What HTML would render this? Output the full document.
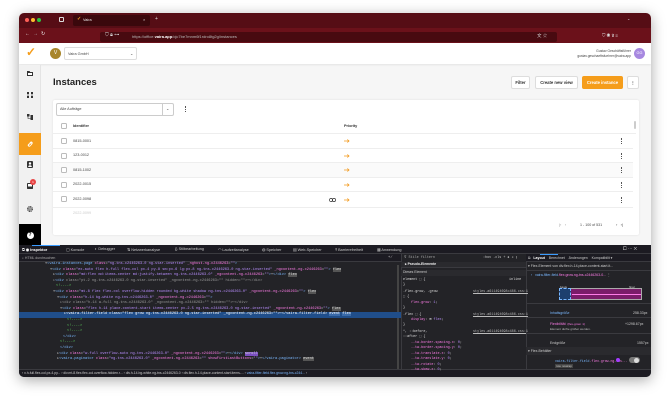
<!DOCTYPE html>
<html><head><meta charset="utf-8"><style>
*{box-sizing:border-box;margin:0;padding:0}
body{width:670px;height:402px;background:#fff;position:relative;overflow:hidden;font-family:"Liberation Sans",sans-serif}
.a{position:absolute}
.win{left:19px;top:13px;width:632px;height:364px;border-radius:5px;overflow:hidden;box-shadow:0 3px 14px rgba(0,0,0,.35);background:#f6f6f6}
.t{position:absolute;white-space:nowrap}
.btn{position:absolute;border:1px solid #ddd;background:#fff;border-radius:2px;font-size:4.2px;font-weight:bold;color:#333;display:flex;align-items:center;justify-content:center}
.row{position:absolute;left:53px;width:583px;height:14.5px;border-bottom:0.6px solid #eee;background:#fff}
.cb{position:absolute;left:8px;top:4px;width:6px;height:6px;border:0.6px solid #bbb;border-radius:1.5px;background:#fff}
.id{position:absolute;left:20px;top:4.5px;font-size:3.8px;color:#444}
.pr{position:absolute;left:291px;top:5px}
.km{position:absolute;left:568px;top:4px;width:1.2px;height:6px;border-left:1.2px dotted #555}
.code{font-family:"Liberation Mono",monospace;font-size:3.6px;color:#ddd}
.tag{color:#7ab8ff}.at{color:#ff7de9}.vl{color:#b98eff}
.ln{position:absolute;white-space:nowrap;height:5.6px;line-height:5.6px}
.dt{font-size:3.8px;color:#ccc}
.si{position:absolute;left:8px}
</style></head><body>
<div class="a win">
 <div class="a" style="left:0;top:0;width:632px;height:15px;background:#560d15"></div>
 <div class="a" style="left:6px;top:5px;width:4px;height:4px;border-radius:50%;background:#ff5f57"></div>
 <div class="a" style="left:12px;top:5px;width:4px;height:4px;border-radius:50%;background:#febc2e"></div>
 <div class="a" style="left:18px;top:5px;width:4px;height:4px;border-radius:50%;background:#28c840"></div>
 <div class="a" style="left:40px;top:4px;width:5px;height:5px;border:0.8px solid #ddd;border-radius:1px"></div>
 <div class="a" style="left:54px;top:1.5px;width:77px;height:11px;background:#3a080c;border-radius:2px"></div>
 <div class="t" style="left:58px;top:3px;font-size:5px;color:#f5a623;font-weight:bold">✓</div>
 <div class="t" style="left:64px;top:4.5px;font-size:3.8px;color:#eee">Vaira</div>
 <div class="t" style="left:124px;top:3.5px;font-size:4px;color:#ddd">×</div>
 <div class="t" style="left:136px;top:3px;font-size:5px;color:#ddd">+</div>
 <div class="t" style="left:608px;top:3px;font-size:4px;color:#ddd">⌄</div>
 <div class="a" style="left:0;top:15px;width:632px;height:15px;background:#6b111a"></div>
 <div class="t" style="left:6px;top:18px;font-size:5px;color:#eee">←</div>
 <div class="t" style="left:14px;top:18px;font-size:5px;color:#bbb">→</div>
 <div class="t" style="left:22px;top:18px;font-size:5px;color:#eee">↻</div>
 <div class="a" style="left:81px;top:18.5px;width:457px;height:10px;background:#480a10;border-radius:2px"></div>
 <div class="t" style="left:86px;top:19px;font-size:5px;color:#ddd">⛉ 🔒︎ ⊶</div>
 <div class="t" style="left:113px;top:21px;font-size:4px;color:#bbb">https://office.<b style="color:#fff">vaira.app</b>/ojc7be7mnm6f1rdro8tg2g/instances</div>
 <div class="t" style="left:518px;top:19.5px;font-size:4.5px;color:#ddd">文 ☆</div>
 <div class="t" style="left:583px;top:19.5px;font-size:4.5px;color:#ddd">⛉ ◉ ⇧ ≡</div>
 <div class="a" style="left:0;top:30px;width:632px;height:21px;background:#fff;box-shadow:0 1px 2px rgba(0,0,0,.08)"></div>
 <div class="t" style="left:7px;top:32px;font-size:12px;color:#f59d1b;font-weight:bold">✓</div>
 <div class="a" style="left:31px;top:35px;width:11px;height:11px;border-radius:50%;background:#a8862c;color:#fff;font-size:5px;text-align:center;line-height:11px">V</div>
 <div class="a" style="left:45px;top:34px;width:73px;height:13px;border:0.6px solid #ddd;border-radius:2px;background:#fff"></div>
 <div class="t" style="left:49px;top:38.5px;font-size:3.8px;color:#444">Vaira GmbH</div>
 <div class="t" style="left:111px;top:37.5px;font-size:4px;color:#444">⌄</div>
 <div class="t" style="left:440px;top:36px;font-size:3.3px;color:#444;text-align:right;width:172px;line-height:4.6px">Gustav Geschäftsführer<br>gustav.geschaeftsfuehrer@vaira.app</div>
 <div class="a" style="left:615px;top:35px;width:11px;height:11px;border-radius:50%;background:#a788e0;color:#fff;font-size:3.8px;text-align:center;line-height:11px">GG</div>
 <!-- sidebar -->
 <div class="a" style="left:0;top:52px;width:22px;height:181px;background:#f1f1f1;border-right:0.6px solid #e4e4e4"></div>
 <svg class="si" style="top:58px" width="6" height="5"><path d="M0 0h2.5l.7 1H6v4H0z" fill="#333"/><rect x="1" y="2" width="4" height="2" fill="#fff"/></svg>
 <svg class="si" style="top:79px" width="6" height="6"><rect x="0" y="0" width="2" height="2" fill="#333"/><rect x="4" y="0" width="2" height="2" fill="#333"/><rect x="0" y="4" width="2" height="2" fill="#333"/><rect x="4" y="4" width="2" height="2" fill="#333"/><path d="M1 2v2M5 2v2" stroke="#333" stroke-width=".6"/></svg>
 <svg class="si" style="top:101px" width="6" height="6"><rect x="0" y="0" width="2.5" height="2.5" fill="#333"/><rect x="3.5" y="1" width="2.5" height="2.5" fill="#333"/><rect x="3.5" y="3.5" width="2.5" height="2.5" fill="#333"/><path d="M1 2.5v2h2.5" stroke="#333" stroke-width=".6" fill="none"/></svg>
 <div class="a" style="left:0;top:120px;width:22px;height:22px;background:#f59d1b"></div>
 <svg class="si" style="top:128px" width="6" height="6"><path d="M1 5l1.5-1.5M3.5 2.5L5 1M1.5 3.5l1-1a1 1 0 011.5 1.5l-1 1a1 1 0 01-1.5-1.5zM2.5 2.5l1-1.2a1 1 0 011.5 1.5l-1 1" stroke="#fff" stroke-width=".8" fill="none"/></svg>
 <svg class="si" style="top:148px" width="6" height="7"><rect x="0" y="0" width="6" height="7" rx="1" fill="#333"/><circle cx="3" cy="2.5" r="1.2" fill="#fff"/><path d="M1.2 6a1.8 1.8 0 013.6 0z" fill="#fff"/></svg>
 <svg class="si" style="top:170px" width="6" height="6"><rect x="0" y="0" width="6" height="6" rx=".8" fill="#333"/><rect x="1" y="1" width="4" height="2.5" fill="#fff"/></svg>
 <div class="a" style="left:11px;top:166px;width:6px;height:6px;border-radius:50%;background:#e84545;color:#fff;font-size:3px;text-align:center;line-height:6px">1</div>
 <svg class="si" style="top:193px" width="6" height="6"><circle cx="3" cy="3" r="2.2" fill="none" stroke="#333" stroke-width="1.4" stroke-dasharray="1.2 .5"/><circle cx="3" cy="3" r=".8" fill="#333"/></svg>
 <div class="a" style="left:0;top:211px;width:22px;height:22px;background:#000"></div>
 <div class="a" style="left:7.5px;top:218.5px;width:7px;height:7px;border-radius:50%;background:#fff;color:#000;font-size:5px;text-align:center;line-height:7px;font-weight:bold">?</div>
 <!-- content -->
 <div class="t" style="left:34px;top:64px;font-size:9.5px;font-weight:bold;color:#222">Instances</div>
 <div class="btn" style="left:492px;top:63px;width:19px;height:13px">Filter</div>
 <div class="btn" style="left:516px;top:63px;width:43px;height:13px">Create new view</div>
 <div class="btn" style="left:563px;top:63px;width:41px;height:13px;background:#f59d1b;border-color:#f59d1b;color:#fff">Create instance</div>
 <div class="btn" style="left:608px;top:63px;width:12px;height:13px">⋮</div>
 <div class="a" style="left:34px;top:87px;width:586px;height:135px;background:#fff;box-shadow:0 0 2px rgba(0,0,0,.1);border-radius:2px"></div>
 <div class="a" style="left:37px;top:90px;width:118px;height:13px;border:0.6px solid #ccc;border-radius:2px;background:#fff"></div>
 <div class="a" style="left:143px;top:90px;width:0.6px;height:13px;background:#ccc"></div>
 <div class="t" style="left:41px;top:94px;font-size:3.8px;color:#444">Alle Aufträge</div>
 <div class="t" style="left:147px;top:93px;font-size:4px;color:#444">⌄</div>
 <div class="a" style="left:166px;top:93px;width:1.2px;height:6px;border-left:1.2px dotted #555"></div>
 <div class="row" style="left:34px;top:106px"><div class="cb"></div><div class="id" style="font-weight:bold;color:#333">Identifier</div><div class="id" style="left:291px;font-weight:bold;color:#333">Priority</div></div>
 <div class="row" style="left:34px;top:121px;width:580px"><div class="cb"></div><div class="id">0815-0001</div><svg class="pr" width="6" height="4"><path d="M0 2h5M3.3.5L5 2 3.3 3.5" stroke="#f29a1f" stroke-width=".8" fill="none"/></svg><div class="km"></div></div>
 <div class="row" style="left:34px;top:135.5px;width:580px"><div class="cb"></div><div class="id">123-0012</div><svg class="pr" width="6" height="4"><path d="M0 2h5M3.3.5L5 2 3.3 3.5" stroke="#f29a1f" stroke-width=".8" fill="none"/></svg><div class="km"></div></div>
 <div class="row" style="left:34px;top:150px;width:580px;background:#fafafa"><div class="cb"></div><div class="id">0815-1002</div><svg class="pr" width="6" height="4"><path d="M0 2h5M3.3.5L5 2 3.3 3.5" stroke="#f29a1f" stroke-width=".8" fill="none"/></svg><div class="km"></div></div>
 <div class="row" style="left:34px;top:164.5px;width:580px"><div class="cb"></div><div class="id">2022-0015</div><svg class="pr" width="6" height="4"><path d="M0 2h5M3.3.5L5 2 3.3 3.5" stroke="#f29a1f" stroke-width=".8" fill="none"/></svg><div class="km"></div></div>
 <div class="row" style="left:34px;top:179px;width:580px;height:16px"><div class="cb"></div><div class="id">2022-0098</div><svg class="a" style="left:276px;top:5.5px" width="7" height="4"><rect x=".4" y=".4" width="3.2" height="3.2" rx="1.6" fill="none" stroke="#333" stroke-width=".7"/><rect x="3.4" y=".4" width="3.2" height="3.2" rx="1.6" fill="none" stroke="#333" stroke-width=".7"/></svg><svg class="pr" style="top:6px" width="6" height="4"><path d="M0 2h5M3.3.5L5 2 3.3 3.5" stroke="#f29a1f" stroke-width=".8" fill="none"/></svg><div class="km" style="top:5px"></div></div>
 <div class="t" style="left:54px;top:198px;font-size:3.8px;color:#ccc">2022-0099</div>
 <div class="a" style="left:615px;top:108px;width:2px;height:8px;background:#ccc;border-radius:1px"></div>
 <div class="t" style="left:540px;top:209px;font-size:4px;color:#999">|‹ &nbsp; ‹</div>
 <div class="t" style="left:561px;top:209.5px;font-size:3.6px;color:#444">1 - 100 of 531</div>
 <div class="t" style="left:597px;top:209px;font-size:4px;color:#444">› &nbsp; ›|</div>
 <!-- devtools -->
 <div class="a" style="left:0;top:232px;width:632px;height:132px;background:#232327"></div>
 <div class="a" style="left:0;top:232px;width:632px;height:9px;background:#1c1b22;border-bottom:0.6px solid #3a3a3f"></div>
 <div class="a" style="left:13px;top:232px;width:28px;height:1px;background:#3b9cff"></div>
 <div class="t dt" style="left:3px;top:233.5px;color:#eee">⧉ <b style="color:#fff">◉ Inspektor</b></div>
 <div class="t dt" style="left:47px;top:233.5px">▢ Konsole</div>
 <div class="t dt" style="left:76px;top:233.5px">◐ Debugger</div>
 <div class="t dt" style="left:108px;top:233.5px">⇅ Netzwerkanalyse</div>
 <div class="t dt" style="left:156px;top:233.5px">{} Stilbearbeitung</div>
 <div class="t dt" style="left:199px;top:233.5px">◠ Laufzeitanalyse</div>
 <div class="t dt" style="left:243px;top:233.5px">◍ Speicher</div>
 <div class="t dt" style="left:274px;top:233.5px">▤ Web-Speicher</div>
 <div class="t dt" style="left:316px;top:233.5px">☨ Barrierefreiheit</div>
 <div class="t dt" style="left:358px;top:233.5px">▦ Anwendung</div>
 <div class="t dt" style="left:604px;top:233px;font-size:4.5px">⧠ ⋯ ✕</div>
 <div class="a" style="left:0;top:241px;width:382px;height:8px;background:#1c1b22;border-bottom:0.6px solid #3a3a3f"></div>
 <div class="t dt" style="left:3px;top:242.5px;color:#aaa;font-size:3.5px">⌕ HTML durchsuchen</div>
 <div class="t dt" style="left:369px;top:241.5px;color:#ccc">+ ⁄</div>
 <div class="a" style="left:382px;top:241px;width:0.6px;height:116px;background:#3a3a3f"></div>
 <div class="a" style="left:507px;top:241px;width:0.6px;height:116px;background:#3a3a3f"></div>
 <div class="a" style="left:378px;top:252px;width:2px;height:105px;background:#444"></div>
 <div class="code">
  <div class="ln" style="left:26px;top:249px">▾<span class="tag">&lt;vaira-instances-page</span> <span class="at">class</span>=<span class="vl">"ng-tns-c2446263-0 ng-star-inserted"</span> <span class="at">_nghost-ng-c2446263</span>=<span class="vl">""</span><span class="tag">&gt;</span></div>
  <div class="ln" style="left:31px;top:254.6px">▾<span class="tag">&lt;div</span> <span class="at">class</span>=<span class="vl">"ex-auto flex h-full flex-col px-4 py-8 sm:px-6 lg:px-8 ng-tns-c2446263-0 ng-star-inserted"</span> <span class="at">_ngcontent-ng-c2446263</span>=<span class="vl">""</span><span class="tag">&gt;</span> <span style="background:#555;color:#ddd">flex</span></div>
  <div class="ln" style="left:34px;top:260.2px">▸<span class="tag">&lt;div</span> <span class="at">class</span>=<span class="vl">"md:flex md:items-center md:justify-between ng-tns-c2446263-0"</span> <span class="at">_ngcontent-ng-c2446263</span>=<span class="vl">""</span><span class="tag">&gt;</span>⋯<span class="tag">&lt;/div&gt;</span> <span style="background:#555">flex</span></div>
  <div class="ln" style="left:34px;top:265.8px;color:#999">▸<span class="tag">&lt;div</span> class="pt-2 ng-tns-c2446263-0 ng-star-inserted" _ngcontent-ng-c2446263="" hidden=""&gt;⋯&lt;/div&gt;</div>
  <div class="ln" style="left:37px;top:271.4px;color:#5fd35f">&lt;!----&gt;</div>
  <div class="ln" style="left:34px;top:277px">▾<span class="tag">&lt;div</span> <span class="at">class</span>=<span class="vl">"mt-8 flex flex-col overflow-hidden rounded bg-white shadow ng-tns-c2446263-0"</span> <span class="at">_ngcontent-ng-c2446263</span>=<span class="vl">""</span><span class="tag">&gt;</span> <span style="background:#555">flex</span></div>
  <div class="ln" style="left:38px;top:282.6px">▾<span class="tag">&lt;div</span> <span class="at">class</span>=<span class="vl">"h-14 bg-white ng-tns-c2446263-0"</span> <span class="at">_ngcontent-ng-c2446263</span>=<span class="vl">""</span><span class="tag">&gt;</span></div>
  <div class="ln" style="left:41px;top:288.2px;color:#999">▸&lt;div class="h-14 w-full ng-tns-c2446263-0" _ngcontent-ng-c2446263="" hidden=""&gt;⋯&lt;/div&gt;</div>
  <div class="ln" style="left:41px;top:293.8px">▾<span class="tag">&lt;div</span> <span class="at">class</span>=<span class="vl">"flex h-14 place-content-start items-center px-2.5 ng-tns-c2446263-0 ng-star-inserted"</span> <span class="at">_ngcontent-ng-c2446263</span>=<span class="vl">""</span><span class="tag">&gt;</span> <span style="background:#555">flex</span></div>
  <div class="ln" style="left:0;top:299.4px;width:382px;background:#204e8a"></div>
  <div class="ln" style="left:45px;top:299.4px;color:#fff">▸&lt;vaira-filter-field class="flex grow ng-tns-c2446263-0 ng-star-inserted" _ngcontent-ng-c2446263=""&gt;⋯&lt;/vaira-filter-field&gt; <span style="background:#3a6aa8">event</span> <span style="background:#3a6aa8">flex</span></div>
  <div class="ln" style="left:48px;top:305px;color:#5fd35f">&lt;!----&gt;</div>
  <div class="ln" style="left:48px;top:310.6px;color:#5fd35f">&lt;!----&gt;</div>
  <div class="ln" style="left:48px;top:316.2px;color:#5fd35f">&lt;!----&gt;</div>
  <div class="ln" style="left:44px;top:321.8px" ><span class="tag">&lt;/div&gt;</span></div>
  <div class="ln" style="left:41px;top:327.4px;color:#5fd35f">&lt;!----&gt;</div>
  <div class="ln" style="left:41px;top:333px"><span class="tag">&lt;/div&gt;</span></div>
  <div class="ln" style="left:38px;top:338.6px">▸<span class="tag">&lt;div</span> <span class="at">class</span>=<span class="vl">"w-full overflow-auto ng-tns-c2446263-0"</span> <span class="at">_ngcontent-ng-c2446263</span>=<span class="vl">""</span><span class="tag">&gt;</span>⋯<span class="tag">&lt;/div&gt;</span> <span style="background:#7a4fc0">scroll</span></div>
  <div class="ln" style="left:38px;top:344.2px">▸<span class="tag">&lt;vaira-paginator</span> <span class="at">class</span>=<span class="vl">"ng-tns-c2446263-0"</span> <span class="at">_ngcontent-ng-c2446263</span>=<span class="vl">""</span> <span class="at">showFirstLastButtons</span>=<span class="vl">""</span><span class="tag">&gt;</span>⋯<span class="tag">&lt;/vaira-paginator&gt;</span> <span style="background:#555">event</span></div>
 </div>
 <div class="a" style="left:0;top:356px;width:632px;height:8px;background:#1c1b22;border-top:0.6px solid #3a3a3f"></div>
 <div class="t dt" style="left:3px;top:357.5px;font-size:3.4px">‹ x.h-full.flex-col.px-4.py... › div.mt-8.flex.flex-col.overflow-hidden.r... › div.h-14.bg-white.ng-tns-c2446263-0 › div.flex.h-14.place-content-start.items-... › <span style="color:#7ab8ff">vaira-filter-field.flex.grow.ng-tns-c244...</span> ›</div>
 <div class="code" style="font-size:3.4px">
  <div class="ln" style="left:385px;top:243px;color:#aaa">⊽ Stile filtern</div>
  <div class="ln" style="left:464px;top:243px;color:#ccc">:hov .cls + ✹ ◑ ▯</div>
  <div class="ln" style="left:382px;top:249px;width:125px;background:#2a2a2e;border-bottom:0.6px solid #3a3a3f"></div>
  <div class="ln" style="left:386px;top:249px;font-family:'Liberation Sans';font-weight:bold;color:#eee">▸ Pseudo-Elemente</div>
  <div class="ln" style="left:382px;top:257px;width:125px;background:#2a2a2e"></div>
  <div class="ln" style="left:384px;top:257px;font-family:'Liberation Sans';color:#ccc">Dieses Element</div>
  <div class="ln" style="left:384px;top:265px">element ⬚ {</div><div class="ln" style="left:490px;top:265px">inline</div>
  <div class="ln" style="left:384px;top:270px">}</div>
  <div class="ln" style="left:384px;top:277px">.flex-grow, .grow</div><div class="ln" style="left:454px;top:277px;text-decoration:underline;color:#bbb">styles.a611494698c486.css:1</div>
  <div class="ln" style="left:384px;top:282px">⬚ {</div>
  <div class="ln" style="left:392px;top:288px"><span class="at">flex-grow</span>: <span class="vl">1</span>;</div>
  <div class="ln" style="left:384px;top:293px">}</div>
  <div class="ln" style="left:384px;top:300px">.flex ⬚ {</div><div class="ln" style="left:454px;top:300px;text-decoration:underline;color:#bbb">styles.a611494698c486.css:1</div>
  <div class="ln" style="left:392px;top:305px"><span class="at">display</span>: ⊞ <span class="vl">flex</span>;</div>
  <div class="ln" style="left:384px;top:310px">}</div>
  <div class="ln" style="left:384px;top:317px">*, ::before,</div><div class="ln" style="left:454px;top:317px;text-decoration:underline;color:#bbb">styles.a611494698c486.css:1</div>
  <div class="ln" style="left:384px;top:322px">::after ⬚ {</div>
  <div class="ln" style="left:392px;top:327.5px"><span class="at">--tw-border-spacing-x</span>: <span class="vl">0</span>;</div>
  <div class="ln" style="left:392px;top:333px"><span class="at">--tw-border-spacing-y</span>: <span class="vl">0</span>;</div>
  <div class="ln" style="left:392px;top:338.5px"><span class="at">--tw-translate-x</span>: <span class="vl">0</span>;</div>
  <div class="ln" style="left:392px;top:344px"><span class="at">--tw-translate-y</span>: <span class="vl">0</span>;</div>
  <div class="ln" style="left:392px;top:349.5px"><span class="at">--tw-rotate</span>: <span class="vl">0</span>;</div>
  <div class="ln" style="left:392px;top:355px"><span class="at">--tw-skew-x</span>: <span class="vl">0</span>;</div>
 </div>
 <div style="font-size:3.5px;color:#ccc">
  <div class="a" style="left:507px;top:241px;width:125px;height:8px;background:#1c1b22;border-bottom:0.6px solid #3a3a3f"></div>
  <div class="a" style="left:521px;top:241px;width:18px;height:0.8px;background:#3b9cff"></div>
  <div class="t" style="left:509px;top:242.5px">⧉ &nbsp; <b style="color:#fff">Layout</b> &nbsp;&nbsp; Berechnet &nbsp;&nbsp; Änderungen &nbsp;&nbsp; Kompatibilit ▾</div>
  <div class="t" style="left:509px;top:251px">▾ Flex-Element von div.flex.h-14.place-content-start.it...</div>
  <div class="a" style="left:507px;top:256.5px;width:125px;height:0.6px;background:#3a3a3f"></div>
  <div class="t" style="left:512px;top:259.5px;color:#7ab8ff">‹ &nbsp; vaira-filter-field<span style="color:#ff7de9">.flex.grow.ng-tns-c2446263-0...</span> <span style="color:#ccc">⋮</span></div>
  <div class="t" style="left:541px;top:271.5px;font-size:3px">basis</div><div class="t" style="left:610px;top:271.5px;font-size:3px">final</div>
  <div class="a" style="left:540px;top:275px;width:83px;height:12px;background:#7a1c6a;border:0.6px solid #aaa"></div>
  <div class="a" style="left:540px;top:275px;width:12px;height:12px;background:#1d3f6e;border:0.6px dashed #7ab8ff"></div>
  <div class="a" style="left:553px;top:280.5px;width:69px;height:0.6px;background:#ff7de9"></div>
  <div class="a" style="left:507px;top:290px;width:125px;height:0.6px;background:#3a3a3f"></div>
  <div class="t" style="left:531px;top:298px;color:#7ab8ff">Inhaltsgröße</div><div class="t" style="left:614px;top:298px">258.33px</div>
  <div class="a" style="left:507px;top:304px;width:125px;height:0.6px;background:#3a3a3f"></div>
  <div class="t" style="left:531px;top:309px;color:#ff7de9">Flexibilität <span style="color:#ff7de9;font-size:3px">&nbsp;(flex-grow: 1)</span></div><div class="t" style="left:606px;top:309px">+1298.67px</div>
  <div class="t" style="left:531px;top:314px;font-size:3px;color:#bbb">Element durfte größer werden.</div>
  <div class="a" style="left:507px;top:320px;width:125px;height:0.6px;background:#3a3a3f"></div>
  <div class="t" style="left:531px;top:328px">Endgröße</div><div class="t" style="left:618px;top:328px">1557px</div>
  <div class="a" style="left:507px;top:334px;width:125px;height:8px;background:#2a2a2e"></div>
  <div class="t" style="left:509px;top:336px">▾ Flex-Behälter</div>
  <div class="t" style="left:536px;top:345.5px;color:#7ab8ff;font-family:'Liberation Mono';font-size:3.2px">vaira-filter-field<span style="color:#ff7de9">.flex.grow.ng-tns...</span></div>
  <div class="a" style="left:597px;top:345px;width:4px;height:4px;border-radius:50%;background:#a33cff"></div>
  <div class="a" style="left:610px;top:344px;width:11px;height:6px;border-radius:3px;background:#777"></div>
  <div class="a" style="left:615px;top:344.5px;width:5px;height:5px;border-radius:50%;background:#ddd"></div>
  <div class="t" style="left:536px;top:351px;font-size:3px;background:#444;padding:0 1px">row</div>
  <div class="t" style="left:542px;top:351px;font-size:3px;background:#444;padding:0 1px">nowrap</div>
 </div>
</div>
</body></html>
